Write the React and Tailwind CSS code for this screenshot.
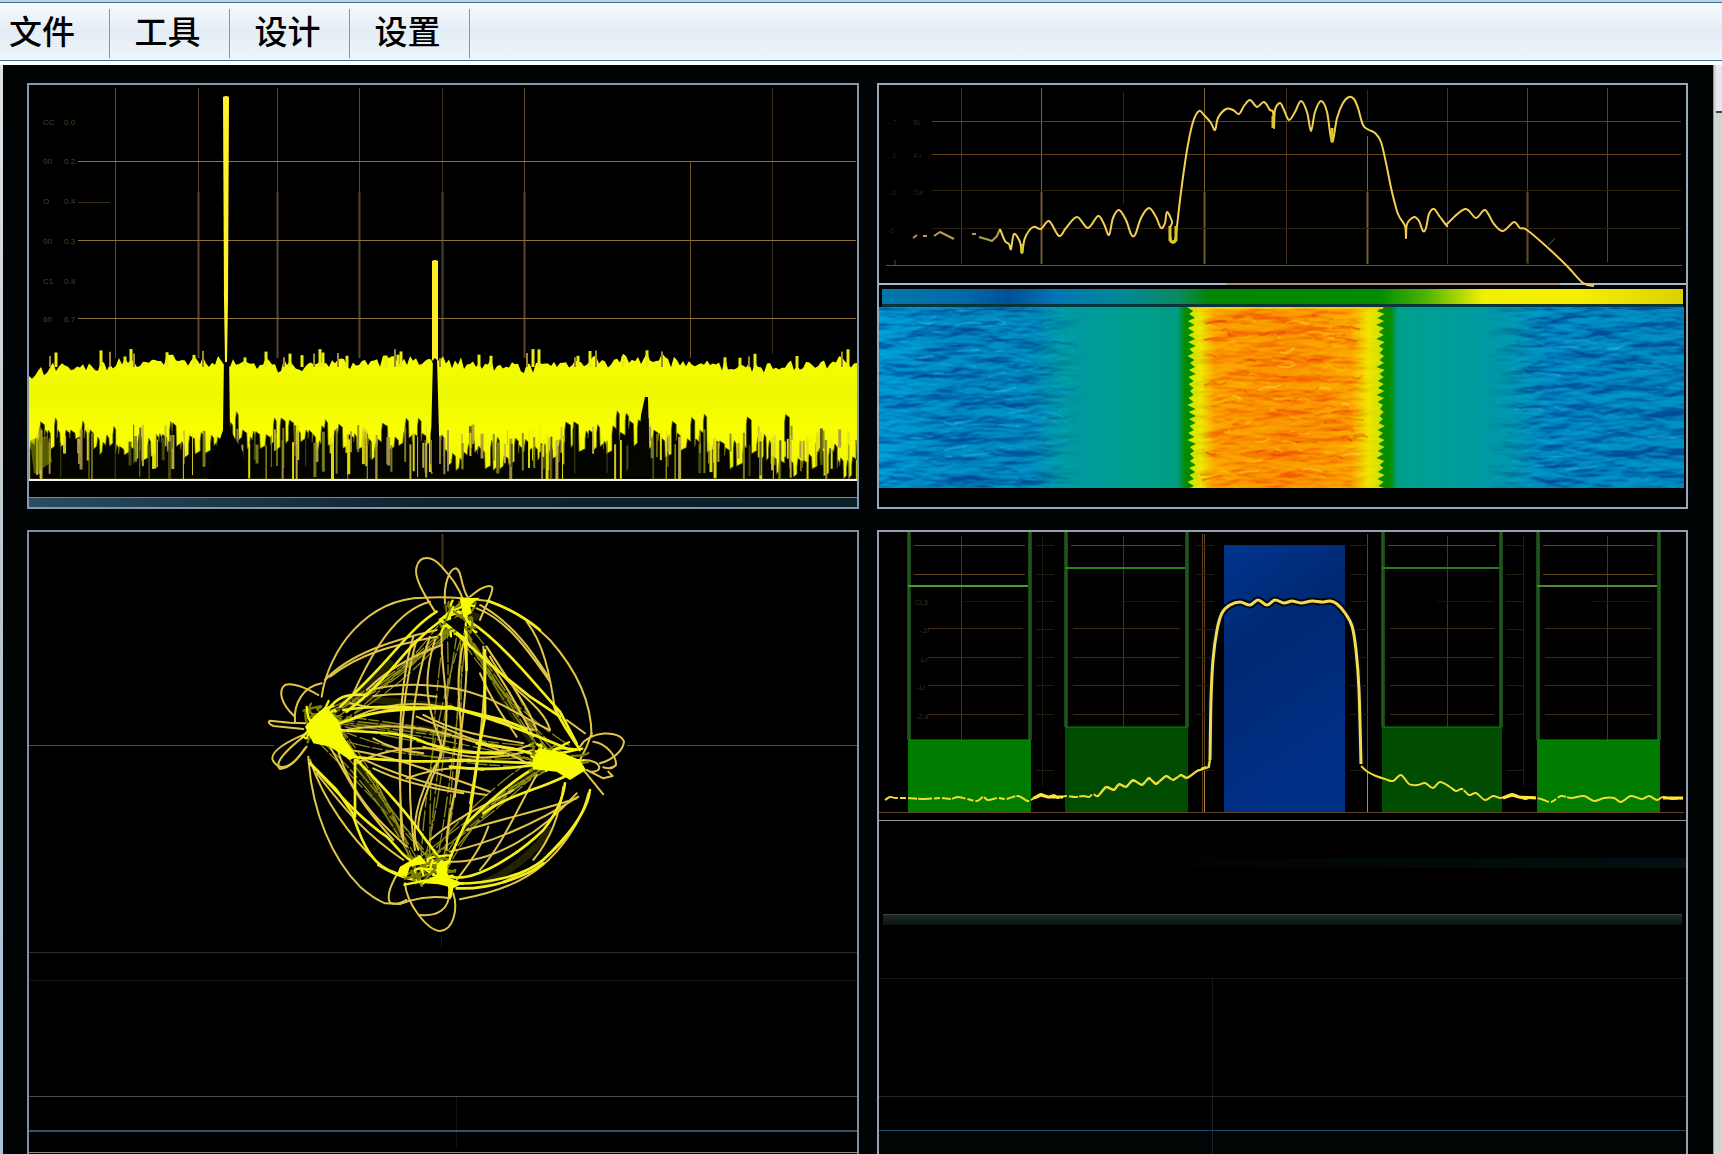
import React from "react";

const MENU = ["工具", "设计", "设置"];

// small seeded generator so the traces look the same on every render
const makeRandom = (seed) => () => {
  seed = (seed * 16807) % 2147483647;
  return seed / 2147483647;
};

// rounds a list of points into a smooth curve
const smooth = (pts) => {
  let d = `M${pts[0][0]} ${pts[0][1]}`;
  for (let i = 0; i < pts.length - 1; i++) {
    const p0 = pts[i - 1] || pts[i];
    const p1 = pts[i];
    const p2 = pts[i + 1];
    const p3 = pts[i + 2] || p2;
    const c = [
      p1[0] + (p2[0] - p0[0]) / 6,
      p1[1] + (p2[1] - p0[1]) / 6,
      p2[0] - (p3[0] - p1[0]) / 6,
      p2[1] - (p3[1] - p1[1]) / 6,
    ].map((n) => n.toFixed(1));
    d += `C${c[0]} ${c[1]} ${c[2]} ${c[3]} ${p2[0]} ${p2[1]}`;
  }
  return d;
};

const HLines = ({ ys, x1, x2, stroke, opacity }) =>
  ys.map((y) => (
    <line key={y} x1={x1} x2={x2} y1={y + 0.5} y2={y + 0.5} stroke={stroke} opacity={opacity} />
  ));

const VLines = ({ xs, y1, y2, stroke, opacity, width }) =>
  xs.map((x) => (
    <line key={x} x1={x + 0.5} x2={x + 0.5} y1={y1} y2={y2} stroke={stroke} opacity={opacity} strokeWidth={width} />
  ));

/* ---------- noise spectrum ---------- */

const buildNoise = () => {
  const rand = makeRandom(4711);
  let top = "M29 480";
  const spikes = [];
  for (let x = 29; x <= 857; x += 3) {
    const edge = x < 48 ? 374 - (x - 29) * 0.5 : 361 + 3 * Math.sin(x / 37);
    const r = rand();
    const y = edge + rand() * 9 - (r > 0.9 ? 6 : 0) - (r < 0.3 ? 4 : 0);
    top += `L${x} ${y.toFixed(1)}`;
    if (r > 0.84 && x > 48) spikes.push([x, 349 + rand() * 9, 367]);
  }
  top += "L857 480Z";

  // ragged lower edge of the band
  let under = "M30 479";
  let x = 30;
  let level = 440;
  while (x < 854) {
    level += (rand() - 0.5) * 16;
    level = Math.min(460, Math.max(430, level));
    const deep = rand();
    const y = deep > 0.93 ? 408 + rand() * 14 : deep > 0.7 ? level - 12 : level;
    const w = 2 + rand() * 4;
    under += `L${x.toFixed(1)} ${(y + 8).toFixed(1)}L${(x + 1).toFixed(1)} ${y.toFixed(1)}L${(x + w).toFixed(1)} ${(y + 3).toFixed(1)}`;
    x += w;
    if (rand() > 0.45) {
      const g = 2 + rand() * 5;
      const low = level + 8 + rand() * 14;
      under += `L${(x + 0.5).toFixed(1)} ${low.toFixed(1)}L${(x + g).toFixed(1)} ${(low - 3).toFixed(1)}`;
      x += g;
    }
  }
  under += "L856 440L856 479Z";

  // thin bars that hang below the edge
  const tones = ["#f2f200", "#c9b84c", "#85881c", "#e6dc20", "#4b5010", "#a99648"];
  const bars = Array.from({ length: 175 }, (_, i) => {
    const bx = 32 + rand() * 822;
    const y1 = 424 + rand() * 22;
    return [bx, y1, Math.min(479, y1 + 14 + rand() * 36), tones[i % 6], 1 + Math.round(rand() * 2)];
  });
  return { top, under, spikes, bars };
};

const noise = buildNoise();

const LEVELS = [
  [122, "CC", "0.0"],
  [161, "00", "0.2"],
  [201, "O", "0.4"],
  [241, "00", "0.3"],
  [281, "C1", "0.4"],
  [319, "60", "6.7"],
];

const NoiseChart = () => (
  <svg viewBox="29 85 828 394" className="block w-full h-auto">
    <VLines xs={[115, 198, 277, 359, 524]} y1={88} y2={358} stroke="#6e5430" opacity="0.85" />
    <VLines xs={[442]} y1={88} y2={358} stroke="#6e5430" opacity="0.6" />
    <VLines xs={[198, 277, 359, 442, 524]} y1={192} y2={358} stroke="#564432" width="3" opacity="0.5" />
    <VLines xs={[690]} y1={162} y2={358} stroke="#8a6a28" opacity="0.8" />
    <VLines xs={[772]} y1={88} y2={354} stroke="#4c391f" opacity="0.8" />
    <HLines ys={[161, 240, 318]} x1={78} x2={856} stroke="#8c703e" />
    <line x1="78" x2="110" y1="202.500" y2="202.500" stroke="#3c2d18" />
    <g fontFamily="Liberation Sans, sans-serif" fontSize="8" fill="#4a4026">
      {LEVELS.map(([y, a, b]) => (
        <g key={y}>
          <text x="43" y={y + 3}>{a}</text>
          <text x="64" y={y + 3}>{b}</text>
        </g>
      ))}
    </g>

    <defs>
      <linearGradient id="band" x1="0" y1="350" x2="0" y2="480" gradientUnits="userSpaceOnUse">
        <stop offset="0" stopColor="#f7ff00" />
        <stop offset="0.35" stopColor="#eef800" />
        <stop offset="0.6" stopColor="#f9ff00" />
        <stop offset="1" stopColor="#f0f400" />
      </linearGradient>
    </defs>
    <path d={noise.top} fill="url(#band)" />
    {noise.spikes.map(([x, y1, y2], i) => (
      <line key={i} x1={x} x2={x} y1={y1} y2={y2} stroke={i % 3 ? "#e9ee10" : "#a08a30"} strokeWidth={i % 3 ? 3 : 2} />
    ))}
    <path d={noise.under} fill="#030300" stroke="#5c6200" strokeOpacity="0.7" />
    {noise.bars.map(([x, y1, y2, tone, w], i) => (
      <line key={i} x1={x} x2={x} y1={y1} y2={y2} stroke={tone} strokeWidth={w} opacity="0.9" />
    ))}
    <path d="M30 440L48 436L52 462L34 474Z" fill="#8d9400" opacity="0.6" />

    <path d="M224 355L223 430L219 442L214 456L208 479H246L243 452L236 440L230 430L229 355Z" fill="#000" />
    <path d="M433 358L431 440L432 472H440L437 358Z" fill="#000" />
    <path d="M645 397H648L649 440L650 479H622L638 452L641 415Z" fill="#060600" />
    <path d="M223 97Q226 95 229 97L228 300L227 362H225L224 300Z" fill="#fff12c" />
    <path d="M432 261Q435 259 438 261V361L435 358L432 361Z" fill="#ffef22" />
    <path d="M431 440V464M440 436V464" stroke="#8b7a2b" strokeWidth="2" />
  </svg>
);

/* ---------- channel spectrum with waterfall ---------- */

const CHANNEL = [
  [1000, 229], [1005, 241], [1009, 244], [1011, 249], [1014, 234], [1020, 242], [1022, 253], [1025, 238],
  [1033, 227], [1041, 229], [1049, 221], [1059, 236], [1066, 228], [1077, 217], [1088, 228], [1098, 216],
  [1104, 224], [1109, 235], [1113, 218], [1119, 210], [1126, 220], [1131, 234], [1135, 235], [1141, 218],
  [1149, 208], [1156, 217], [1161, 228], [1165, 223], [1167, 212], [1172, 222], [1170, 228], [1171, 240],
  [1175, 240], [1177, 226], [1181, 192], [1187, 150], [1193, 122], [1199, 111], [1204, 115], [1211, 123],
  [1215, 130], [1218, 118], [1226, 109], [1233, 110], [1239, 114], [1244, 106], [1250, 100], [1257, 107],
  [1264, 102], [1270, 110], [1273, 112], [1274, 128], [1275, 110], [1280, 103], [1284, 110], [1289, 120],
  [1295, 112], [1301, 101], [1307, 112], [1311, 131], [1315, 112], [1321, 101], [1327, 112], [1332, 142],
  [1337, 118], [1343, 103], [1349, 97], [1354, 99], [1358, 108], [1363, 125], [1369, 130], [1375, 133],
  [1381, 142], [1386, 163], [1392, 192], [1398, 214], [1405, 226], [1406, 238], [1407, 224], [1414, 217],
  [1419, 221], [1423, 231], [1426, 228], [1429, 214], [1434, 209], [1440, 217], [1447, 226], [1448, 223],
  [1465, 209], [1476, 218], [1485, 210], [1494, 224], [1503, 231], [1514, 222], [1520, 228], [1527, 230],
  [1547, 247], [1567, 266], [1583, 283], [1594, 286],
];

const jagged = () => {
  const rand = makeRandom(99);
  let left = "";
  let right = "";
  for (let y = 307; y <= 486; y += 7) {
    left += `L${(1187 + rand() * 3).toFixed(1)} ${y}L${(1193 + rand() * 3).toFixed(1)} ${y + 4}`;
    right = `L${(1380 - rand() * 4).toFixed(1)} ${y + 4}L${(1385 - rand() * 2).toFixed(1)} ${y}` + right;
  }
  return `M1190 307${left}L1190 488L1384 488${right}L1384 307Z`;
};

const buildFlakes = () => {
  const rand = makeRandom(2024);
  const list = [];
  for (let i = 0; i < 300; i++) {
    const zone = i % 5;
    let x, colors, w;
    if (zone < 2) {
      x = 886 + rand() * 165;
      colors = ["#0094d4", "#0068a8", "#17a6d8", "#006fb4"];
      w = 8 + rand() * 22;
    } else if (zone === 2) {
      x = 1508 + rand() * 150;
      colors = ["#0096c8", "#0068a4", "#1b9fd0", "#006aa6"];
      w = 10 + rand() * 24;
    } else {
      x = 1200 + rand() * 158;
      colors = ["#ffc400", "#f07000", "#ffd028", "#e86000"];
      w = 6 + rand() * 16;
    }
    const y = (zone === 2 ? 335 : 312) + rand() * (zone === 2 ? 145 : 168);
    const bend = rand() * 10 - 5;
    list.push({
      d: `M${x.toFixed(0)} ${y.toFixed(0)}q${(w / 2).toFixed(0)} ${bend.toFixed(0)} ${w.toFixed(0)} ${(rand() * 8 - 4).toFixed(0)}`,
      color: colors[Math.floor(rand() * 4)],
    });
  }
  return list;
};

const flakes = buildFlakes();

const WaterfallChart = () => (
  <svg viewBox="879 85 807 422" className="block w-full h-auto">
    <defs>
      <linearGradient id="scale" x1="882" x2="1683" gradientUnits="userSpaceOnUse">
        <stop offset="0" stopColor="#0078ac" />
        <stop offset="0.1" stopColor="#006aa8" />
        <stop offset="0.16" stopColor="#005098" />
        <stop offset="0.22" stopColor="#0077b4" />
        <stop offset="0.3" stopColor="#008898" />
        <stop offset="0.37" stopColor="#088a62" />
        <stop offset="0.41" stopColor="#008600" />
        <stop offset="0.62" stopColor="#008c00" />
        <stop offset="0.68" stopColor="#50b400" />
        <stop offset="0.75" stopColor="#f0f000" />
        <stop offset="0.87" stopColor="#f8ee00" />
        <stop offset="1" stopColor="#dcd000" />
      </linearGradient>
      <linearGradient id="heat" x1="879" x2="1684" gradientUnits="userSpaceOnUse">
        <stop offset="0" stopColor="#0090cc" />
        <stop offset="0.1" stopColor="#007cba" />
        <stop offset="0.19" stopColor="#0082b8" />
        <stop offset="0.23" stopColor="#0098a4" />
        <stop offset="0.32" stopColor="#00a08c" />
        <stop offset="0.371" stopColor="#009c84" />
        <stop offset="0.38" stopColor="#068c00" />
        <stop offset="0.635" stopColor="#068c00" />
        <stop offset="0.645" stopColor="#00a08c" />
        <stop offset="0.74" stopColor="#009ca0" />
        <stop offset="0.79" stopColor="#0090b0" />
        <stop offset="0.83" stopColor="#0080bc" />
        <stop offset="1" stopColor="#007cb8" />
      </linearGradient>
      <linearGradient id="core" x1="1187" x2="1384" gradientUnits="userSpaceOnUse">
        <stop offset="0" stopColor="#c8e800" />
        <stop offset="0.07" stopColor="#ece400" />
        <stop offset="0.14" stopColor="#fa9c00" />
        <stop offset="0.5" stopColor="#f88a00" />
        <stop offset="0.83" stopColor="#fa9c00" />
        <stop offset="0.92" stopColor="#f0e400" />
        <stop offset="1" stopColor="#c8e000" />
      </linearGradient>
      <linearGradient id="sideFade" x1="879" x2="1684" gradientUnits="userSpaceOnUse">
        <stop offset="0" stopColor="#fff" />
        <stop offset="0.18" stopColor="#fff" />
        <stop offset="0.26" stopColor="#000" />
        <stop offset="0.38" stopColor="#000" />
        <stop offset="0.4" stopColor="#fff" />
        <stop offset="0.6" stopColor="#fff" />
        <stop offset="0.62" stopColor="#000" />
        <stop offset="0.75" stopColor="#000" />
        <stop offset="0.82" stopColor="#fff" />
        <stop offset="1" stopColor="#fff" />
      </linearGradient>
      <mask id="sides" maskUnits="userSpaceOnUse" x="879" y="307" width="805" height="181">
        <rect x="879" y="307" width="805" height="181" fill="url(#sideFade)" />
      </mask>
      <filter id="ripple" x="0" y="0" width="1" height="1" colorInterpolationFilters="sRGB">
        <feTurbulence type="fractalNoise" baseFrequency="0.025 0.075" numOctaves="3" seed="8" result="n" />
        <feDiffuseLighting in="n" surfaceScale="5" diffuseConstant="0.82" lightingColor="#fff">
          <feDistantLight azimuth="80" elevation="38" />
        </feDiffuseLighting>
      </filter>
      <filter id="soft">
        <feGaussianBlur stdDeviation="0.6" />
      </filter>
    </defs>

    <VLines xs={[961, 1286, 1447]} y1={88} y2={264} stroke="#5a431f" opacity="0.8" />
    <VLines xs={[1123]} y1={92} y2={204} stroke="#33271a" />
    <VLines xs={[1041, 1204]} y1={88} y2={264} stroke="#80642c" />
    <VLines xs={[1041, 1204, 1367, 1527]} y1={192} y2={264} stroke="#6b5530" width="3" opacity="0.5" />
    <VLines xs={[1367]} y1={136} y2={264} stroke="#80642c" />
    <VLines xs={[1367]} y1={90} y2={120} stroke="#33271a" />
    <VLines xs={[1527, 1607]} y1={88} y2={262} stroke="#6b5020" opacity="0.85" />
    <HLines ys={[121, 154]} x1={932} x2={1681} stroke="#6b4a1c" opacity="0.9" />
    <HLines ys={[190, 228]} x1={932} x2={1681} stroke="#2e200f" />
    <HLines ys={[265]} x1={886} x2={1682} stroke="#6e4f28" />
    <g fontFamily="Liberation Sans, sans-serif" fontSize="7" fill="#2e2618">
      <text x="888" y="125">- 7</text>
      <text x="913" y="125">l8r</text>
      <text x="888" y="158">. J</text>
      <text x="913" y="158">4-r</text>
      <text x="888" y="195">- 2</text>
      <text x="913" y="195">7or</text>
      <text x="888" y="233">-0</text>
    </g>
    <path d="M895 260V265" stroke="#5c431f" />

    <line x1="879" x2="1686" y1="284" y2="284" stroke="#a9b8c6" strokeWidth="2" />
    <line x1="1226" x2="1560" y1="284" y2="284" stroke="#a98a68" strokeWidth="2" opacity="0.8" />

    <g fill="none" stroke="#f3cf52" strokeWidth="2" strokeLinejoin="round">
      <path d="M913 238l4 -3M923 236l4 0M934 236l6 -4l6 3l8 4M972 234l4 0M979 237l7 2l6 2l5 -5l3 -7" stroke="#b89c4a" />
      <path d={smooth(CHANNEL)} />
      <path d="M1170 226V240Q1173 245 1176 240V226M1022 244V253M1332 128V142M1273 116V128" stroke="#d8c828" strokeWidth="3" />
      <path d="M1547 247l8 -9" stroke="#6e5a2c" strokeWidth="1" />
    </g>

    <rect x="882" y="289" width="801" height="15" fill="url(#scale)" />
    <rect x="882" y="304" width="801" height="3" fill="#06363c" />
    <g className="isolate">
      <rect x="879" y="307" width="805" height="181" fill="url(#heat)" />
      <path d={jagged()} fill="url(#core)" />
      <line x1="1190" x2="1383" y1="308" y2="308" stroke="#ffc800" strokeWidth="2" />
      <g fill="none" strokeWidth="2" opacity="0.5" filter="url(#soft)">
        {flakes.map((f, i) => (
          <path key={i} d={f.d} stroke={f.color} />
        ))}
      </g>
      <g mask="url(#sides)" className="mix-blend-soft-light" opacity="0.75">
        <rect x="879" y="307" width="805" height="181" filter="url(#ripple)" />
      </g>
    </g>
  </svg>
);

/* ---------- constellation, drawn on a 1200 x 1260 canvas ---------- */

const THIN = [
  "M215 500C235 360 350 205 520 203C600 198 660 205 715 213C800 240 860 290 900 330C980 420 1025 520 1025 620",
  "M175 680C185 850 250 990 330 1070Q370 1105 405 1120L450 1122L480 1112Q540 1095 600 1105",
  "M555 245C520 190 490 140 500 110C510 75 545 75 575 110C610 150 625 170 640 210",
  "M585 220C580 160 600 115 618 115C636 120 630 165 655 205",
  "M660 200C690 175 715 160 727 172C730 190 700 240 690 270",
  "M135 560C90 520 85 480 105 465C130 455 180 480 205 495",
  "M215 460C160 470 130 520 135 575",
  "M170 580L120 578L60 572Q50 580 70 588L160 597",
  "M170 610C110 635 60 665 68 690C90 730 130 710 165 655",
  "M160 620C110 660 70 700 90 717C120 715 140 690 170 650",
  "M990 650C1020 600 1110 600 1122 635C1120 660 1090 690 1050 700",
  "M1000 690C1060 690 1060 730 1020 725M1010 720L1060 745L1088 738L1075 725",
  "M1000 720L1060 793",
  "M1030 635C1070 640 1100 680 1098 705Q1085 720 1060 712",
  "M1025 610L1010 650L990 690M950 570L1005 610",
  "M465 1060C470 1120 530 1200 570 1203C610 1200 625 1140 610 1090",
  "M510 1155C560 1160 600 1140 597 1085",
  "M440 1035C420 1070 410 1100 420 1118Q440 1128 470 1110",
  "M560 300C430 330 300 370 225 450",
  "M560 320C430 345 330 370 240 440",
  "M575 345C480 380 400 430 350 480",
  "M540 215C440 240 370 360 310 490",
  "M830 275C880 340 900 430 915 540",
  "M680 235C780 270 860 400 900 455M690 225C790 280 850 370 895 440",
  "M360 480C460 455 600 460 700 500C780 530 830 570 900 600",
  "M370 498C430 490 500 490 560 500",
  "M490 320C445 470 440 700 460 930M500 330C450 500 445 750 455 920",
  "M540 320C470 520 470 800 495 960",
  "M555 330C480 560 620 640 560 700C500 800 480 900 505 960",
  "M575 310C570 400 600 500 585 620C570 720 500 820 505 900",
  "M640 340C600 500 660 600 620 760C600 850 590 900 590 960",
  "M650 340C655 500 620 680 615 800",
  "M700 350C715 500 680 700 660 820",
  "M345 690C450 740 590 780 710 795M370 715C450 755 540 775 640 790",
  "M300 660C440 680 560 730 720 785M470 745Q590 700 700 720",
  "M500 560C600 600 700 650 800 660M520 555C620 610 720 620 820 640",
  "M180 690C220 810 300 920 385 1000",
  "M200 730C280 830 330 900 460 990",
  "M600 965C720 940 860 880 985 800M600 995C740 1000 880 900 980 790",
  "M620 1050C690 960 700 930 715 890",
  "M650 900C780 860 880 840 980 805",
  "M860 735C800 840 760 940 690 1020",
  "M940 770C930 850 900 930 850 990",
  "M985 870C900 1030 780 1080 630 1108",
  "M1015 790C990 900 900 1000 760 1055",
  "M540 930C620 860 700 830 790 780",
  "M700 370C760 450 800 520 850 620M710 350C780 460 830 520 860 600",
  "M690 430C730 520 760 560 800 620M720 380C770 480 880 520 900 600",
  "M235 640C300 760 330 820 430 930M260 650C300 790 380 870 470 950",
  "M315 560Q450 500 600 535T850 600M320 700Q430 640 600 660T850 640",
  "M300 520Q420 550 600 530M290 600Q450 570 620 620T830 700",
  "M370 625Q430 660 520 670M520 650C640 680 700 700 850 660",
];

const THICK = [
  "M560 245C470 300 420 400 270 530",
  "M575 270C450 360 430 440 290 545",
  "M580 275L640 330L740 420L840 500L930 560",
  "M660 275C760 340 860 470 930 545L980 640",
  "M715 213C790 240 840 275 870 300",
  "M640 215L650 330M640 215L570 270M585 262L625 245L650 260",
  "M570 270C600 250 640 245 655 250M570 270L645 325L660 350",
  "M270 600C360 610 450 600 530 640C620 670 680 670 760 670",
  "M270 580C370 540 440 540 520 535L620 535C700 560 760 560 830 600",
  "M280 540C400 520 500 540 600 530C700 560 800 590 960 660",
  "M300 680C400 690 500 700 660 690",
  "M600 710C680 720 760 720 850 705M600 690L870 700",
  "M680 640C740 650 800 650 870 680",
  "M320 690C400 770 480 860 520 920L580 1000",
  "M315 690V860L260 780L180 700",
  "M180 700C240 760 320 860 410 920C440 950 460 980 480 990",
  "M310 860C340 950 370 1010 440 1030",
  "M385 1005C440 1040 500 1060 600 1060",
  "M645 330L650 420M705 360V560L690 640L660 850C640 900 610 950 595 1000",
  "M600 1060C700 1065 820 1040 880 990C930 940 1010 860 1020 780",
  "M620 1075C720 1080 830 1040 880 1000",
  "M650 880C720 810 800 740 880 700",
  "M700 850C780 790 900 770 960 730",
  "M600 1040C680 1060 820 960 880 900C920 850 940 800 945 760",
  "M910 520C930 580 960 610 990 660",
  "M585 1000C590 1040 600 1060 600 1100M600 1060L640 1060",
  "M230 545C260 500 290 490 350 495",
];

const NODES = [
  [628, 268, 58, 60, 31],
  [215, 580, 60, 70, 47],
  [930, 680, 90, 45, 58],
  [535, 1020, 85, 50, 73],
];

const buildKnots = () =>
  NODES.flatMap(([cx, cy, rx, ry, seed]) => {
    const rand = makeRandom(seed * 7919);
    return Array.from({ length: 16 }, () => {
      const p = () => `${(cx + (rand() * 2 - 1) * rx).toFixed(0)} ${(cy + (rand() * 2 - 1) * ry).toFixed(0)}`;
      return `M${p()}Q${p()} ${p()}`;
    });
  });

const knots = buildKnots();

// loose strands running between neighbouring symbol points
const LINKS = [
  [0, 1, 0.06], [0, 2, -0.05], [1, 3, 0.05], [3, 2, 0.08], [1, 2, -0.04], [0, 3, 0.03],
];

const buildStrands = () => {
  const rand = makeRandom(60607);
  return LINKS.flatMap(([a, b, bow]) =>
    Array.from({ length: 7 }, () => {
      const [ax, ay] = NODES[a];
      const [bx, by] = NODES[b];
      const j = (n, s) => n + (rand() * 2 - 1) * s;
      const k = bow + (rand() * 2 - 1) * 0.12;
      const mx = (ax + bx) / 2 + (by - ay) * k;
      const my = (ay + by) / 2 - (bx - ax) * k;
      return `M${j(ax, 45).toFixed(0)} ${j(ay, 45).toFixed(0)}Q${mx.toFixed(0)} ${my.toFixed(0)} ${j(bx, 45).toFixed(0)} ${j(by, 40).toFixed(0)}`;
    })
  );
};

const strands = buildStrands();

const Constellation = () => (
  <svg viewBox="29 532 828 420" className="block w-full h-auto">
    <line x1="29" x2="274" y1="745.500" y2="745.500" stroke="#6b4c20" />
    <line x1="627" x2="857" y1="745.500" y2="745.500" stroke="#6b4c20" />
    <path d="M442.500 534V570" stroke="#4a351a" strokeWidth="2" />
    <path d="M441.500 935V948" stroke="#1a1814" />
    <g transform="translate(250 530) scale(0.3333)" fill="none" strokeLinecap="round" strokeLinejoin="round">
      <g stroke="#6d7000" strokeWidth="22" opacity="0.3">
        <path d="M290 530Q360 490 350 500T600 530M300 590Q450 580 580 610M320 700L460 930M660 880Q740 790 870 720M700 380Q760 520 850 640M590 230L680 260" />
        <path d="M700 1060Q820 1010 900 900M260 540L420 400" />
      </g>
      <g stroke="#8a8a14" strokeWidth="4" strokeDasharray="60 8 30 12">
        {strands.map((d) => (
          <path key={d} d={d} />
        ))}
      </g>
      <g stroke="#dfc648" strokeWidth="6">
        {THIN.map((d) => (
          <path key={d} d={d} />
        ))}
      </g>
      <g stroke="#f2ef1c" strokeWidth="8">
        {THICK.map((d) => (
          <path key={d} d={d} />
        ))}
      </g>
      <g strokeWidth="7">
        {knots.map((d, i) => (
          <path key={i} d={d} stroke={i % 2 ? "#f4f800" : "#7c8000"} />
        ))}
      </g>
      <g fill="#f8fc00">
        <path d="M165 590L190 560L225 530L265 570L280 620L320 680L300 690L240 650L190 640Z" />
        <path d="M845 700L865 655L930 665L990 690L1008 720L960 750L920 725L850 718Z" />
        <path d="M560 1000L595 990L590 1040L640 1060L610 1075L605 1105L595 1070L540 1055L560 1035Z" />
        <path d="M450 1010L510 975L530 1000L480 1010L470 1040L440 1035Z" />
        <path d="M630 205L690 203L660 225L665 250L640 260Z" />
      </g>
      <path d="M585 275L625 260L645 275L640 318Z" fill="#030300" />
    </g>
  </svg>
);

/* ---------- adjacent channel power ---------- */

const CHANNELS = [
  { x: 908, w: 123, top: 740, limit: 586, fill: "#007c00", line: "#4d9a30" },
  { x: 1065, w: 123, top: 727, limit: 568, fill: "#004c00", line: "#1f8a14" },
  { x: 1382, w: 120, top: 727, limit: 568, fill: "#004c00", line: "#2a7a20" },
  { x: 1537, w: 123, top: 740, limit: 586, fill: "#007c00", line: "#4d8a3a" },
];

const SLOPE = [
  [885, 800], [890, 797], [896, 798], [908, 798], [925, 799], [940, 798], [951, 799], [958, 797], [967, 799],
  [977, 801], [983, 797], [988, 800], [998, 798], [1006, 799], [1018, 796], [1028, 801], [1034, 798], [1041, 794],
  [1048, 797], [1054, 795], [1058, 798], [1066, 796], [1075, 797], [1083, 796], [1089, 797], [1093, 794],
  [1098, 796], [1106, 787], [1114, 790], [1119, 784], [1126, 787], [1133, 780], [1142, 785], [1149, 778],
  [1156, 784], [1166, 776], [1173, 780], [1181, 775], [1187, 778], [1197, 771], [1203, 768], [1208, 766], [1210, 760],
];

const ROOF = [
  [1210, 760], [1211, 700], [1213, 660], [1217, 630], [1222, 613], [1230, 605], [1240, 602], [1250, 605],
  [1258, 600], [1267, 605], [1275, 600], [1284, 603], [1292, 601], [1301, 603], [1312, 601], [1322, 602],
  [1330, 601], [1337, 604], [1345, 613], [1352, 626], [1356, 650], [1359, 690], [1361, 764],
];

const TAIL = [
  [1361, 766], [1368, 772], [1376, 776], [1385, 779], [1393, 781], [1401, 775], [1409, 784], [1418, 785], [1425, 783],
  [1433, 788], [1440, 782], [1450, 787], [1456, 791], [1462, 789], [1469, 795], [1476, 793], [1485, 800],
  [1493, 796], [1501, 798], [1512, 794], [1519, 797], [1526, 799], [1531, 797], [1541, 799], [1551, 802],
  [1561, 796], [1571, 798], [1584, 796], [1594, 801], [1604, 798], [1614, 798], [1621, 802], [1631, 796],
  [1642, 799], [1649, 796], [1657, 800], [1663, 797], [1672, 799], [1683, 798],
];

const ChannelPower = () => (
  <svg viewBox="879 532 807 288" className="block w-full h-auto">
    <defs>
      <linearGradient id="blue" x1="0" y1="0" x2="0.300" y2="1">
        <stop offset="0" stopColor="#00358e" />
        <stop offset="0.4" stopColor="#002872" />
        <stop offset="1" stopColor="#003088" />
      </linearGradient>
    </defs>
    <rect x="1224" y="545" width="121" height="268" fill="url(#blue)" />

    <VLines xs={[961, 1123, 1447, 1607]} y1={536} y2={740} stroke="#54411f" opacity="0.85" />
    <VLines xs={[1042, 1523]} y1={536} y2={786} stroke="#1f1810" />
    <VLines xs={[1202, 1204, 1367]} y1={534} y2={813} stroke="#705026" opacity="0.85" />
    <VLines xs={[1204, 1367]} y1={770} y2={813} stroke="#b08a40" />
    {CHANNELS.map((c) => (
      <g key={c.x}>
        <HLines ys={[545]} x1={c.x + 6} x2={c.x + c.w - 6} stroke="#5c421c" />
        <HLines ys={c.top === 740 ? [574] : []} x1={c.x + 6} x2={c.x + c.w - 6} stroke="#5c421c" />
        <HLines ys={[601]} x1={c.x + 56} x2={c.x + c.w - 8} stroke="#1d160c" />
        <HLines ys={[628, 657, 685, 714]} x1={c.x + (c.x === 908 ? 20 : 8)} x2={c.x + c.w - 8} stroke="#402c14" />
      </g>
    ))}
    {[1036, 1196, 1350, 1506].map((x) => (
      <HLines key={x} ys={[545, 574, 601, 629, 657, 685, 714, 770]} x1={x} x2={x + 18} stroke="#251b0e" />
    ))}
    <g fontFamily="Liberation Sans, sans-serif" fontSize="7" fill="#3a3118">
      <text x="915" y="605">CL3</text>
      <text x="919" y="633">-.2r</text>
      <text x="919" y="662">-Lr</text>
      <text x="917" y="690">-Lr</text>
      <text x="916" y="719">-2.d</text>
    </g>
    <HLines ys={[812]} x1={879} x2={1684} stroke="#5c4420" />

    {CHANNELS.map((c) => (
      <g key={c.x}>
        <rect x={c.x} y={c.top} width={c.w} height={812 - c.top} fill={c.fill} />
        <line x1={c.x} x2={c.x + c.w} y1={c.top} y2={c.top} stroke="#0a8a0a" />
        <path d={`M${c.x + 1} 532V${c.top}M${c.x + c.w - 1} 532V${c.top}`} stroke="#2f8a2a" strokeWidth="3" />
        <path d={`M${c.x + 1} 532V${c.top}M${c.x + c.w - 1} 532V${c.top}`} stroke="#0a260a" strokeWidth="1" />
        <line x1={c.x} x2={c.x + c.w - 3} y1={c.limit} y2={c.limit} stroke={c.line} strokeWidth="2" />
      </g>
    ))}

    <path d={smooth(ROOF)} fill="none" stroke="#000a18" strokeWidth="7" />
    <g fill="none" strokeLinejoin="round">
      <path d={smooth(SLOPE)} stroke="#efdc30" strokeWidth="2" strokeDasharray="14 2 6 2 9 1" />
      <path d={smooth(ROOF)} stroke="#f7dc52" strokeWidth="3" />
      <path d={smooth(TAIL)} stroke="#efdc30" strokeWidth="2" strokeDasharray="120 1 80 2 12 2 6 2 9 1" />
      <path d="M1098 796L1106 787L1114 790L1119 784L1126 787L1133 780L1142 785L1149 778L1156 784L1166 776L1173 780L1181 775L1187 778L1197 771L1209 767L1210 758" stroke="#efdc30" strokeWidth="2" />
      <path d="M1034 798L1041 795L1048 797L1063 797M1503 798L1512 795L1519 797L1536 798M1663 798H1683" stroke="#ffe63c" strokeWidth="3" />
    </g>
  </svg>
);

/* ---------- page ---------- */

const MenuBar = () => (
  <header className="border-b border-[#3f6d98] bg-[#bdd3e4] pt-[2px]">
    <nav className="flex h-[58px] items-stretch border-t border-[#41719d] bg-linear-to-b from-[#f6fafd] via-[#e4edf5] to-[#eef5fa] pt-[6px] pb-[2px] font-['Noto_Sans_CJK_SC',sans-serif] text-[33px] leading-[40px] font-medium text-black">
      <button className="w-[110px] border-r border-[#8296aa] pb-2 pl-[9px] text-left">文件</button>
      {MENU.map((item) => (
        <button key={item} className="w-[120px] border-r border-[#8296aa] pr-1 pb-2 text-center">
          {item}
        </button>
      ))}
    </nav>
  </header>
);

const App = () => {
  return (
    <div className="flex min-h-screen flex-col bg-white">
      <MenuBar />
      <div className="flex flex-1 pt-1">
        <div className="w-[3px] bg-linear-to-b from-[#dfe3e4] via-[#b9c6cc] to-[#a8c4dc]" />
        <main className="grid min-w-0 flex-1 grid-cols-[832fr_811fr] grid-rows-[auto_1fr] gap-x-[18px] gap-y-[21px] bg-[#010405] pt-[18px] pr-[25px] pl-6">
          <section className="border-2 border-[#8299ad] bg-black">
            <NoiseChart />
            <div className="h-[2px] bg-[#f2f2ee]" />
            <div className="h-4" />
            <div className="h-[10px] border-t border-[#6f8c9e] bg-linear-to-r from-[#2b4c62] via-[#0d222c] to-[#0c1f27]" />
          </section>

          <section className="border-2 border-[#9aabb8] bg-black">
            <WaterfallChart />
          </section>

          <section className="flex flex-col border-2 border-b-0 border-[#7d8ea3] bg-black">
            <Constellation />
            <div className="h-7 border-t border-[#33291f]" />
            <div className="h-[116px] border-t border-[#22150c]" />
            <div className="flex h-[34px] justify-center border-t border-[#4c4c4c] pl-[26px]">
              <div className="w-px bg-[#111]" />
            </div>
            <div className="flex h-[22px] justify-center border-t-2 border-[#365468] pl-[26px]">
              <div className="h-4 w-px bg-[#111]" />
            </div>
            <div className="flex-1 border-t border-[#8a8a88]" />
          </section>

          <section className="flex flex-col border-2 border-b-0 border-[#9a9eae] bg-black">
            <ChannelPower />
            <div className="h-[94px] border-t border-[#8d909c] pt-[37px]">
              <div className="h-[10px] bg-linear-to-r from-black via-[#010506] to-[#031012]" />
            </div>
            <div className="mx-1 h-[11px] border-t border-[#3c4444] bg-linear-to-b from-[#1e2a2a] to-[#0b1413]" />
            <div className="h-[53px]" />
            <div className="flex h-[118px] border-t border-[#1c1210]">
              <div className="w-[41.4%] border-r border-[#151515]" />
            </div>
            <div className="flex h-[34px] border-t border-[#2c2624]">
              <div className="w-[41.4%] border-r border-[#1c2024]" />
            </div>
            <div className="flex flex-1 border-t border-[#1c4866] bg-[#010506]">
              <div className="w-[41.4%] border-r border-[#17222c]" />
            </div>
          </section>
        </main>
        <div className="w-[9px] border-l border-[#8f9698] bg-[#d0d5d5]">
          <div className="ml-[2px] h-12 border-b-2 border-[#3c4347] bg-[#e6e8ef]" />
        </div>
      </div>
    </div>
  );
};

export default App;
